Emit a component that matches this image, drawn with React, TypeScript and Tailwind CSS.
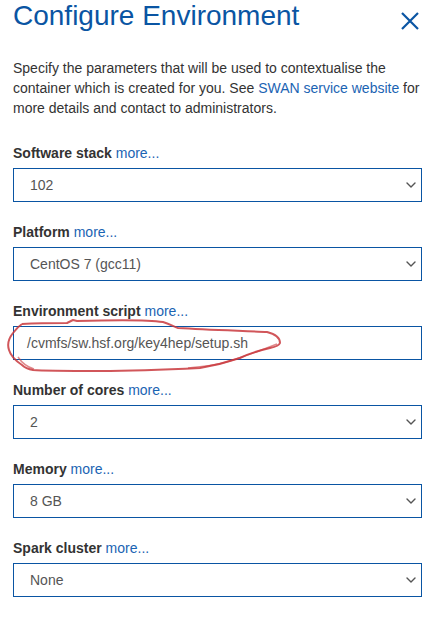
import React from 'react';

type Field = {
  label: string;
  value: string;
  input?: boolean;
};

const fields: Field[] = [
  { label: 'Software stack', value: '102' },
  { label: 'Platform', value: 'CentOS 7 (gcc11)' },
  { label: 'Environment script', value: '/cvmfs/sw.hsf.org/key4hep/setup.sh', input: true },
  { label: 'Number of cores', value: '2' },
  { label: 'Memory', value: '8 GB' },
  { label: 'Spark cluster', value: 'None' },
];

function Chevron() {
  return (
    <svg className="w-[10px] h-[6px]" viewBox="0 0 10 6" fill="none">
      <path d="M1 1l4 4 4-4" stroke="#555" strokeWidth={1.4} strokeLinecap="round" strokeLinejoin="round" />
    </svg>
  );
}

function FieldRow({ field }: { field: Field }) {
  return (
    <div className="mb-5">
      <div className="text-[14px] leading-[20px] mb-[5px]">
        <span className="font-bold text-[#333]">{field.label}</span>{' '}
        <a className="text-[#1b64b3]">more...</a>
      </div>
      {field.input ? (
        <div className="h-[34px] border border-[#0a55a3] flex items-center pl-[13px] text-[14px] text-[#555]">
          {field.value}
        </div>
      ) : (
        <div className="h-[34px] border border-[#0a55a3] flex items-center justify-between pl-[16px] pr-[5px] text-[14px] text-[#555]">
          <span>{field.value}</span>
          <Chevron />
        </div>
      )}
    </div>
  );
}

export default function App() {
  return (
    <div className="relative w-[427px] h-[641px] bg-white overflow-hidden font-['Liberation_Sans',Arial,sans-serif] text-[#333]">
      <div className="pl-[13px] pr-[5px]">
        {/* Header */}
        <div className="flex items-start justify-between">
          <h1 className="text-[28px] leading-[32px] text-[#0a55a3]">Configure Environment</h1>
          <button className="mt-[12px] mr-[3px]">
            <svg className="w-[18px] h-[18px]" viewBox="0 0 18 18" fill="none">
              <path d="M1 1l16 16M17 1L1 17" stroke="#0a55a3" strokeWidth={2.2} />
            </svg>
          </button>
        </div>

        <p className="mt-[26px] text-[14px] leading-[20px]">
          Specify the parameters that will be used to contextualise the container which is created for you. See{' '}
          <a className="text-[#1b64b3]">SWAN service website</a> for more details and contact to administrators.
        </p>

        <div className="mt-[25px]">
          {fields.map((f) => (
            <FieldRow key={f.label} field={f} />
          ))}
        </div>
      </div>

      {/* hand-drawn annotation */}
      <svg className="absolute inset-0 pointer-events-none" width="427" height="641" viewBox="0 0 427 641" fill="none">
        <path
          d="M22,324 C40,323 58,323 67,323 L73,320 L77,321 C110,320 150,320 163,322 C170,324 174,327 178,328 C210,330 250,331 267,332 C275,334 280,338 280,343 C279,346 275,347 270,348 C257,351 246,355 240,358 C225,363 212,366 200,368 C160,370 130,371 100,371 C70,371 45,371 33,370 C27,369 24,367 22,365 C16,361 11,357 9,350 C7,344 9,338 13,333 C16,329 19,326 22,324"
          stroke="#c9383d"
          strokeOpacity={0.85}
          strokeWidth={2}
          strokeLinejoin="round"
        />
        <path d="M277,344 C262,350 245,356 233,360 C222,364 212,366 188,368" stroke="#c9383d" strokeOpacity={0.6} strokeWidth={1.5} />
        <path d="M18,357 C22,363 27,367 34,369" stroke="#c9383d" strokeOpacity={0.6} strokeWidth={1.5} />
      </svg>
    </div>
  );
}
